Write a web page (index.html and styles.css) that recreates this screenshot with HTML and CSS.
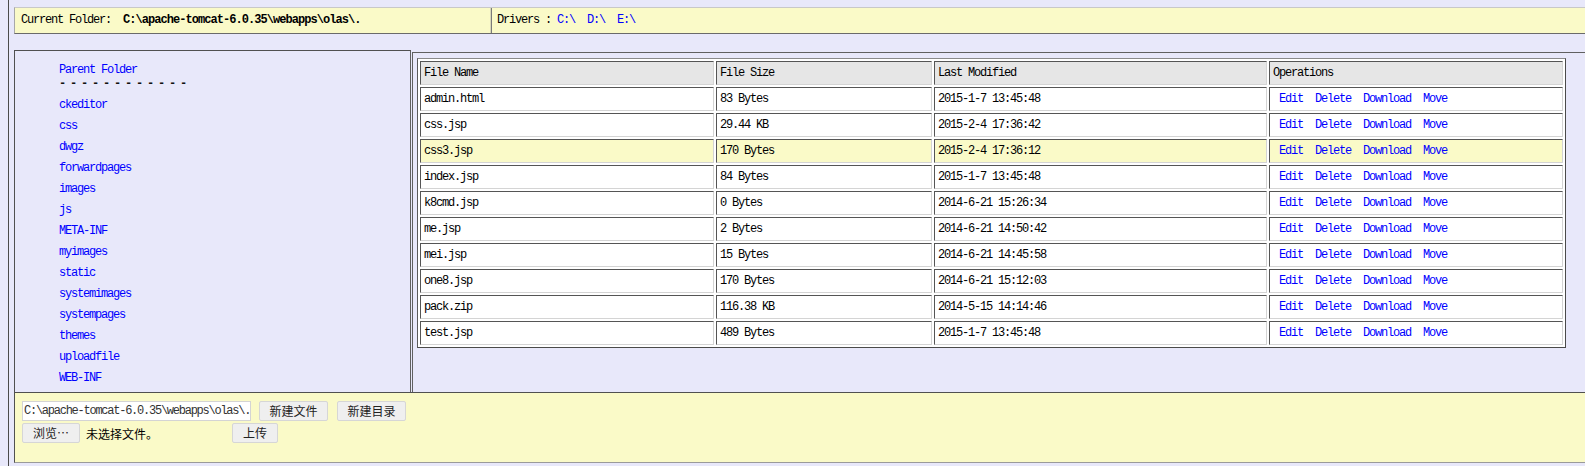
FILE: index.html
```html
<!DOCTYPE html>
<html>
<head>
<meta charset="utf-8">
<title>File Manager</title>
<link rel="stylesheet" href="styles.css">
</head>
<body>
<div class="page">
  <div class="topbar">
    <div class="cur">Current Folder:&nbsp;&nbsp;<b>C:\apache-tomcat-6.0.35\webapps\olas\.</b></div>
    <div class="drv">Drivers : <a href="#">C:\</a>&nbsp;&nbsp;<a href="#">D:\</a>&nbsp;&nbsp;<a href="#">E:\</a></div>
  </div>
  <div class="main">
    <div class="side">
      <div class="parent"><a href="#">Parent Folder</a></div>
      <div class="dash">- - - - - - - - - - - -</div>
      <ul class="tree">
        <li><a href="#">ckeditor</a></li>
        <li><a href="#">css</a></li>
        <li><a href="#">dwgz</a></li>
        <li><a href="#">forwardpages</a></li>
        <li><a href="#">images</a></li>
        <li><a href="#">js</a></li>
        <li><a href="#">META-INF</a></li>
        <li><a href="#">myimages</a></li>
        <li><a href="#">static</a></li>
        <li><a href="#">systemimages</a></li>
        <li><a href="#">systempages</a></li>
        <li><a href="#">themes</a></li>
        <li><a href="#">uploadfile</a></li>
        <li><a href="#">WEB-INF</a></li>
      </ul>
    </div>
    <div class="content">
      <table class="files">
        <thead>
          <tr><th class="c1">File Name</th><th class="c2">File Size</th><th class="c3">Last Modified</th><th class="c4">Operations</th></tr>
        </thead>
        <tbody>
          <tr><td>admin.html</td><td>83 Bytes</td><td>2015-1-7 13:45:48</td><td class="ops">&nbsp;<a href="#">Edit</a>&nbsp;&nbsp;<a href="#">Delete</a>&nbsp;&nbsp;<a href="#">Download</a>&nbsp;&nbsp;<a href="#">Move</a></td></tr>
          <tr><td>css.jsp</td><td>29.44 KB</td><td>2015-2-4 17:36:42</td><td class="ops">&nbsp;<a href="#">Edit</a>&nbsp;&nbsp;<a href="#">Delete</a>&nbsp;&nbsp;<a href="#">Download</a>&nbsp;&nbsp;<a href="#">Move</a></td></tr>
          <tr class="hl"><td>css3.jsp</td><td>170 Bytes</td><td>2015-2-4 17:36:12</td><td class="ops">&nbsp;<a href="#">Edit</a>&nbsp;&nbsp;<a href="#">Delete</a>&nbsp;&nbsp;<a href="#">Download</a>&nbsp;&nbsp;<a href="#">Move</a></td></tr>
          <tr><td>index.jsp</td><td>84 Bytes</td><td>2015-1-7 13:45:48</td><td class="ops">&nbsp;<a href="#">Edit</a>&nbsp;&nbsp;<a href="#">Delete</a>&nbsp;&nbsp;<a href="#">Download</a>&nbsp;&nbsp;<a href="#">Move</a></td></tr>
          <tr><td>k8cmd.jsp</td><td>0 Bytes</td><td>2014-6-21 15:26:34</td><td class="ops">&nbsp;<a href="#">Edit</a>&nbsp;&nbsp;<a href="#">Delete</a>&nbsp;&nbsp;<a href="#">Download</a>&nbsp;&nbsp;<a href="#">Move</a></td></tr>
          <tr><td>me.jsp</td><td>2 Bytes</td><td>2014-6-21 14:50:42</td><td class="ops">&nbsp;<a href="#">Edit</a>&nbsp;&nbsp;<a href="#">Delete</a>&nbsp;&nbsp;<a href="#">Download</a>&nbsp;&nbsp;<a href="#">Move</a></td></tr>
          <tr><td>mei.jsp</td><td>15 Bytes</td><td>2014-6-21 14:45:58</td><td class="ops">&nbsp;<a href="#">Edit</a>&nbsp;&nbsp;<a href="#">Delete</a>&nbsp;&nbsp;<a href="#">Download</a>&nbsp;&nbsp;<a href="#">Move</a></td></tr>
          <tr><td>one8.jsp</td><td>170 Bytes</td><td>2014-6-21 15:12:03</td><td class="ops">&nbsp;<a href="#">Edit</a>&nbsp;&nbsp;<a href="#">Delete</a>&nbsp;&nbsp;<a href="#">Download</a>&nbsp;&nbsp;<a href="#">Move</a></td></tr>
          <tr><td>pack.zip</td><td>116.38 KB</td><td>2014-5-15 14:14:46</td><td class="ops">&nbsp;<a href="#">Edit</a>&nbsp;&nbsp;<a href="#">Delete</a>&nbsp;&nbsp;<a href="#">Download</a>&nbsp;&nbsp;<a href="#">Move</a></td></tr>
          <tr><td>test.jsp</td><td>489 Bytes</td><td>2015-1-7 13:45:48</td><td class="ops">&nbsp;<a href="#">Edit</a>&nbsp;&nbsp;<a href="#">Delete</a>&nbsp;&nbsp;<a href="#">Download</a>&nbsp;&nbsp;<a href="#">Move</a></td></tr>
        </tbody>
      </table>
    </div>
  </div>
  <div class="actions">
    <div class="arow">
      <input class="path" type="text" value="C:\apache-tomcat-6.0.35\webapps\olas\.">
      <button class="btn b-newfile" type="button">新建文件</button>
      <button class="btn b-newdir" type="button">新建目录</button>
    </div>
    <div class="arow arow2">
      <button class="btn b-browse" type="button">浏览…</button>
      <span class="nofile">未选择文件。</span>
      <button class="btn b-upload" type="button">上传</button>
    </div>
  </div>
</div>
</body>
</html>
```
FILE: styles.css
```css
html, body {
  margin: 0;
  padding: 0;
  background: #e8e8fa;
  overflow: hidden;
}
body {
  font-family: "Liberation Mono", "DejaVu Sans Mono", monospace;
  font-size: 12px;
  letter-spacing: -1.2px;
  color: #000;
}
a {
  color: #0000ff;
  text-decoration: none;
}
.page {
  margin-left: 8px;
  border-left: 1px solid #4a4a4a;
  padding: 7px 0 0 5px;
  width: 1620px;
  height: 466px;
  box-sizing: border-box;
}
.topbar {
  display: flex;
  background: #fafac8;
  border-top: 1px solid #c8c8c8;
  border-left: 1px solid #a8a8a8;
  border-bottom: 1px solid #6a6a6a;
  height: 25px;
  line-height: 25px;
}
.cur {
  width: 469px;
  padding-left: 6px;
  border-right: 1px solid #d8d8b8;
}
.cur b {
  letter-spacing: -0.95px;
}
.drv {
  border-left: 1px solid #7a7a7a;
  padding-left: 5px;
  flex: 1;
}
.main {
  display: flex;
  margin-top: 16px;
  height: 342px;
}
.side {
  width: 395px;
  border-left: 1px solid #505050;
  border-top: 1px solid #505050;
  border-right: 1px solid #606060;
  padding-top: 12px;
  box-sizing: content-box;
}
.parent {
  padding-left: 44px;
  line-height: 15px;
}
.dash {
  padding-left: 44px;
  line-height: 12px;
  font-weight: bold;
  letter-spacing: -1.7px;
  color: #111;
}
.tree {
  list-style: none;
  margin: 5px 0 0 0;
  padding: 0 0 0 44px;
}
.tree li {
  line-height: 21px;
}
.content {
  flex: 1;
  margin-left: 1px;
  margin-top: 2px;
  border-left: 1px solid #606060;
  border-top: 1px solid #606060;
  padding: 5px 0 0 4px;
}
.files {
  border-collapse: separate;
  border-spacing: 2px;
  background: #fff;
  border: 1px solid;
  border-color: #8a8a8a #4a4a4a #4a4a4a #5a5a5a;
  width: 1149px;
  table-layout: fixed;
}
.files th, .files td {
  border: 1px solid;
  border-color: #555 #d4d4d4 #d4d4d4 #555;
  padding: 0 3px;
  line-height: 22px;
  text-align: left;
  font-weight: normal;
  white-space: nowrap;
  overflow: hidden;
  box-sizing: border-box;
}
.files th {
  background: #e6e6e6;
}
.c1 { width: 294px; }
.c2 { width: 216px; }
.c3 { width: 333px; }
.c4 { width: 294px; }
.files tr.hl td {
  background: #fafac8;
}
.actions {
  background: #fafac8;
  border-top: 1px solid #505050;
  border-left: 1px solid #505050;
  border-bottom: 1px solid #9a9a9a;
  height: 61px;
  padding: 8px 0 0 7px;
}
.arow {
  display: flex;
  align-items: center;
  height: 20px;
}
.arow2 {
  margin-top: 2px;
}
.path {
  width: 229px;
  height: 20px;
  box-sizing: border-box;
  margin: 0;
  padding: 0 0 0 1px;
  border: 1px solid #d4d4d4;
  background: #fff;
  font-family: "Liberation Mono", monospace;
  font-size: 12px;
  letter-spacing: -1.25px;
  color: #333;
  outline: none;
}
.btn {
  height: 20px;
  box-sizing: border-box;
  margin: 0;
  padding: 0;
  border: 1px solid #d6d6d6;
  border-radius: 2px;
  background: #efefef;
  font-family: "Noto Sans CJK SC", "Noto Sans", sans-serif;
  font-size: 12px;
  letter-spacing: 0;
  color: #222;
  line-height: 18px;
}
.b-newfile { width: 69px; margin-left: 8px; }
.b-newdir { width: 69px; margin-left: 9px; }
.b-browse { width: 58px; }
.nofile {
  font-family: "Noto Sans CJK SC", "Noto Sans", sans-serif;
  font-size: 12px;
  letter-spacing: 0;
  width: 146px;
  padding-left: 6px;
  box-sizing: border-box;
}
.b-upload { width: 46px; margin-left: 6px; }
```
